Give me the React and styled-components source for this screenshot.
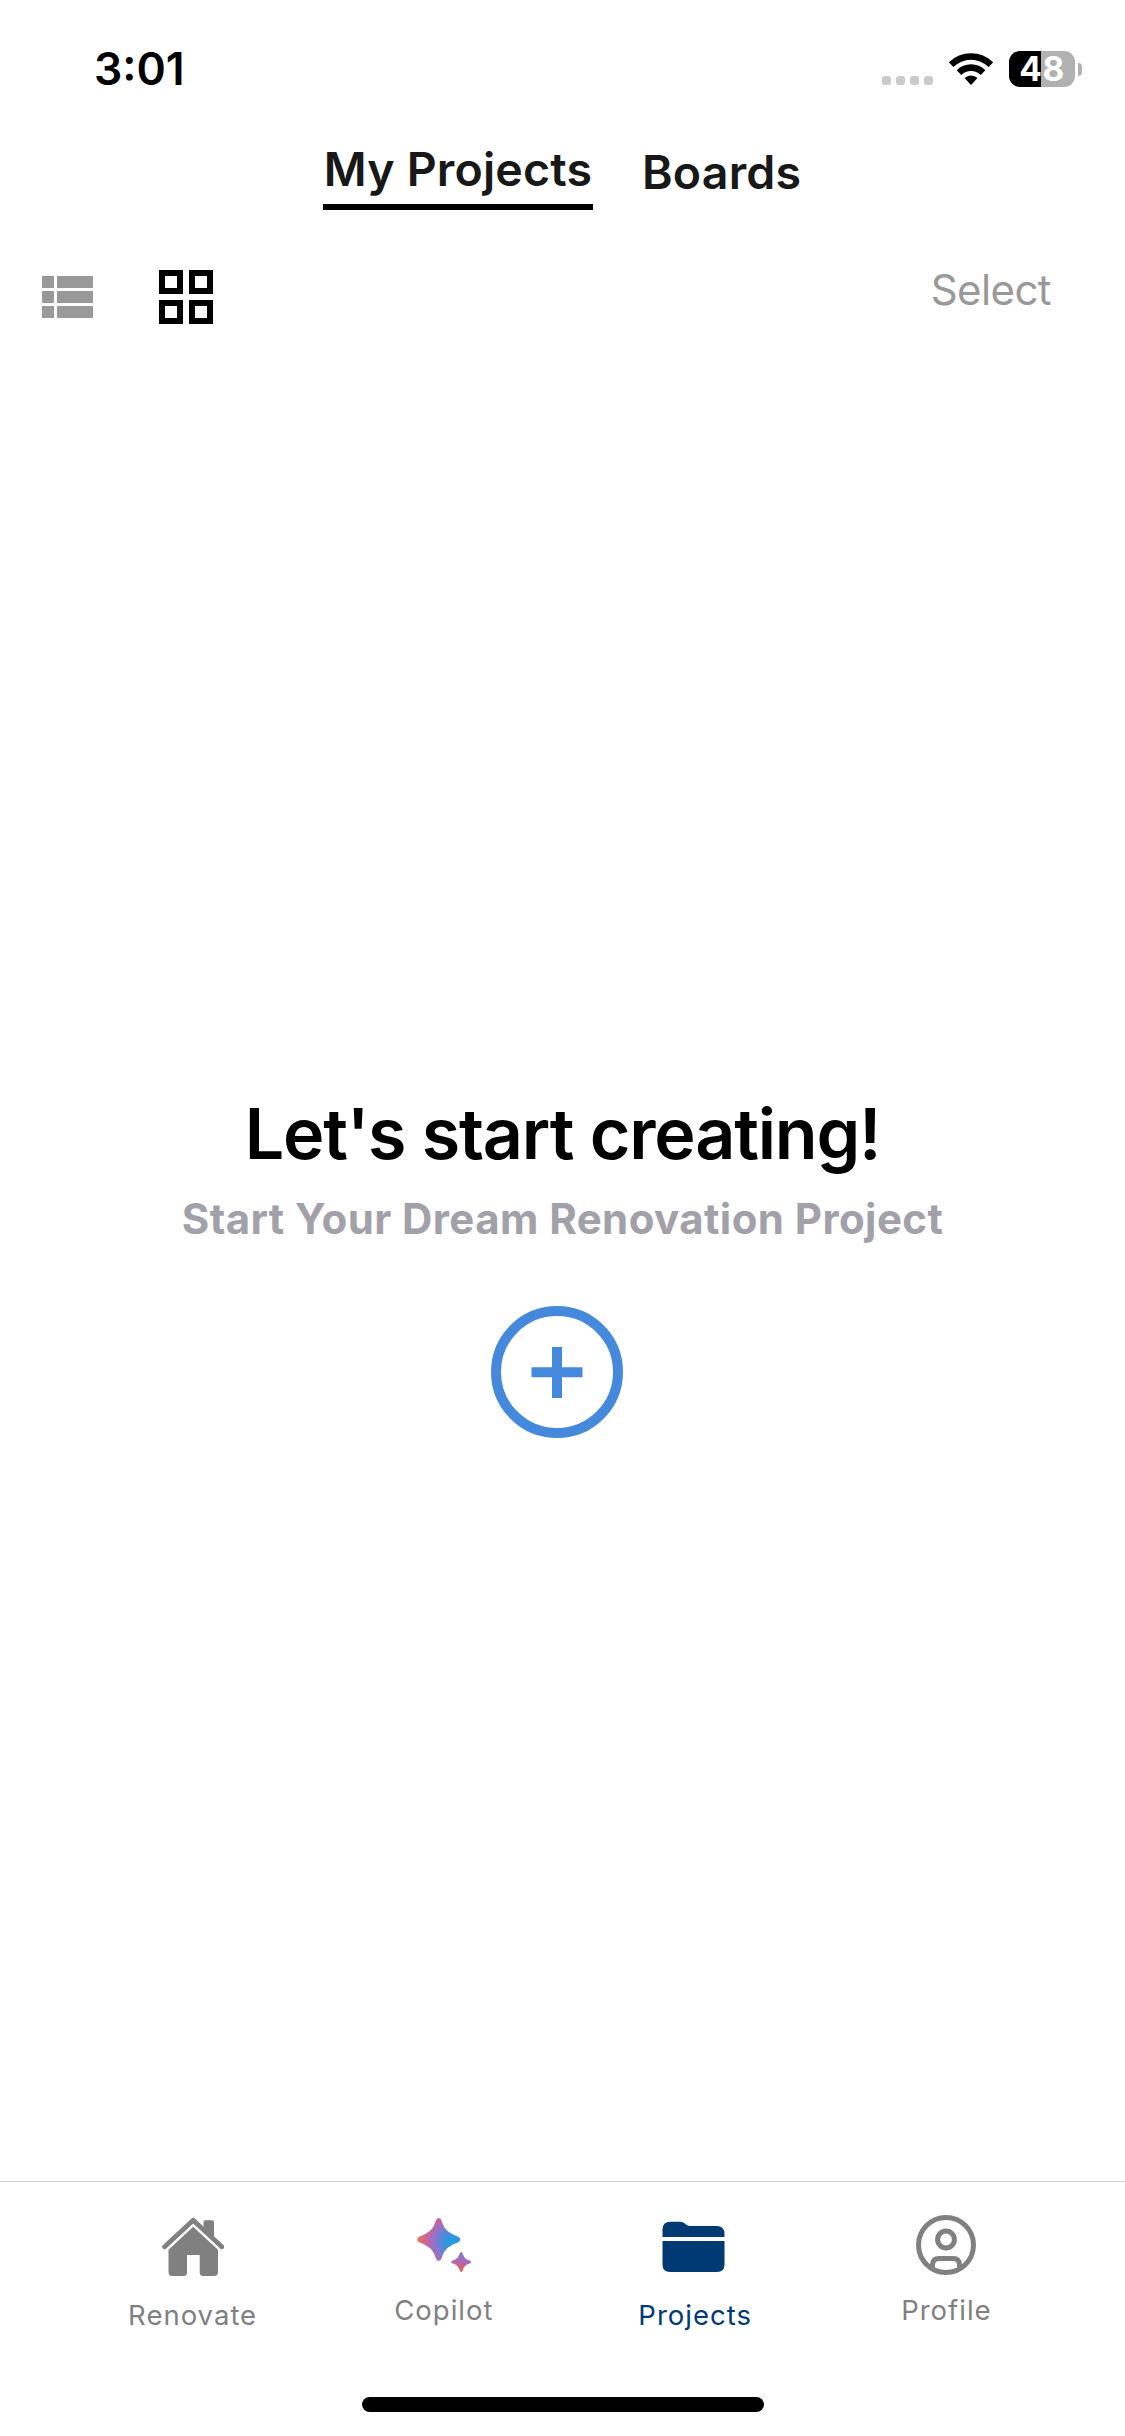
import styled, { createGlobalStyle } from "styled-components";

const GlobalStyle = createGlobalStyle`
  *, *::before, *::after {
    box-sizing: border-box;
  }

  body {
    margin: 0;
    background-color: #fff;
    font-family: Inter, "Liberation Sans", sans-serif;
  }

  button {
    padding: 0;
    border: 0;
    background: none;
    font: inherit;
    color: inherit;
  }

  svg {
    display: block;
  }
`;

const Screen = styled.div`
  display: flex;
  flex-direction: column;
  width: 1125px;
  height: 2436px;
  overflow: hidden;
  background-color: #fff;
`;

const StatusBar = styled.header`
  display: flex;
  align-items: center;
  justify-content: space-between;
  height: 138px;
  padding: 0 43px 0 94px;
`;

const Clock = styled.span`
  font-size: 44.5px;
  font-weight: 600;
  line-height: 54px;
`;

const StatusIcons = styled.div`
  display: flex;
  align-items: center;
`;

const SignalDots = styled.div`
  display: flex;
  gap: 5px;
  margin: 23px 15px 0 0;
`;

const Dot = styled.span`
  width: 9px;
  height: 9px;
  border-radius: 3px;
  background-color: #cacaca;
`;

const BatteryBody = styled.div`
  display: flex;
  align-items: center;
  justify-content: center;
  width: 66px;
  height: 36px;
  margin-left: 15px;
  border-radius: 11px;
  background: linear-gradient(to right, #000 32px, #b1b1b1 32px);
  color: #fff;
  font-size: 33.5px;
  font-weight: 700;
  line-height: 36px;
  letter-spacing: 0.6px;
`;

const BatteryCap = styled.span`
  width: 4px;
  height: 13px;
  margin-left: 3px;
  border-radius: 0 4px 4px 0;
  background-color: #b1b1b1;
`;

const Tabs = styled.nav`
  display: flex;
  align-items: flex-start;
  gap: 49px;
  height: 72px;
  padding-left: 323px;
`;

const Tab = styled.button`
  width: ${({ $active }) => ($active ? "270px" : "auto")};
  height: ${({ $active }) => ($active ? "72px" : "62px")};
  margin-top: ${({ $active }) => ($active ? "0" : "3px")};
  padding-bottom: ${({ $active }) => ($active ? "4px" : "0")};
  border-bottom: ${({ $active }) => ($active ? "6px solid #000" : "0")};
  color: #181818;
  font-size: 46.5px;
  font-weight: 600;
  line-height: 62px;
  letter-spacing: 0.2px;
  white-space: nowrap;
`;

const Toolbar = styled.div`
  display: flex;
  align-items: center;
  height: 174px;
  padding: 0 74px 0 42px;
`;

const ViewButton = styled.button`
  margin-right: 66px;
  color: ${({ $active }) => ($active ? "#000" : "#999")};
`;

const SelectButton = styled.button`
  margin-left: auto;
  padding-bottom: 14px;
  color: #999;
  font-size: 42px;
  line-height: 50px;
  letter-spacing: -0.6px;
`;

const EmptyState = styled.main`
  display: flex;
  flex: 1;
  flex-direction: column;
  align-items: center;
  padding-top: 708px;
`;

const Title = styled.h1`
  margin: 0;
  font-size: 70px;
  font-weight: 600;
  line-height: 84px;
  letter-spacing: -1.2px;
`;

const Subtitle = styled.p`
  margin: 18px 0 62px;
  color: #a2a1a9;
  font-size: 42px;
  font-weight: 700;
  line-height: 50px;
  letter-spacing: 0.42px;
`;

const AddButton = styled.button`
  margin-right: 11px;
  color: #4489dc;
`;

const BottomBar = styled.footer`
  display: flex;
  height: 255px;
  padding: 33px 53px 0 67px;
  border-top: 1px solid #d0d3d3;
`;

const BottomItem = styled.button`
  display: flex;
  flex: 1;
  flex-direction: column;
  align-items: center;
  color: ${({ $active }) => ($active ? "#003a75" : "#808080")};
`;

const BottomLabel = styled.span`
  margin-top: ${({ $raised }) => ($raised ? "16px" : "21px")};
  font-size: 27.5px;
  line-height: 34px;
  letter-spacing: 1px;
`;

const HomeIndicator = styled.div`
  position: absolute;
  top: 2397px;
  left: 362px;
  width: 402px;
  height: 15px;
  border-radius: 8px;
  background-color: #000;
`;

function WifiIcon() {
  return (
    <svg width="46" height="34" viewBox="0 0 46 34">
      <path d="M.8 10.3a31.5 31.5 0 0 1 44.4 0L40.6 15a25 25 0 0 0-35.2 0z" />
      <path d="M8.7 18.2a20.3 20.3 0 0 1 28.6 0l-4.6 4.7a13.8 13.8 0 0 0-19.4 0z" />
      <path d="M16.5 26.1a9.2 9.2 0 0 1 13 0L23 33z" />
    </svg>
  );
}

function ListIcon() {
  return (
    <svg width="51" height="42" viewBox="0 0 51 42" fill="currentColor">
      <path d="M0 0h12v12H0zM15 0h36v12H15zM0 15h12v12H0zM15 15h36v12H15zM0 30h12v12H0zM15 30h36v12H15z" />
    </svg>
  );
}

function GridIcon() {
  return (
    <svg
      width="54"
      height="54"
      viewBox="0 0 54 54"
      fill="none"
      stroke="currentColor"
      strokeWidth="6"
    >
      <path d="M3 3h18v18H3zM33 3h18v18H33zM3 33h18v18H3zM33 33h18v18H33z" />
    </svg>
  );
}

function PlusIcon() {
  return (
    <svg
      width="132"
      height="132"
      viewBox="0 0 132 132"
      fill="none"
      stroke="currentColor"
      strokeWidth="10"
    >
      <circle cx="66" cy="66" r="61" />
      <path d="M66 41v51M40.500 66.200h51" />
    </svg>
  );
}

function HomeIcon() {
  return (
    <svg width="62" height="62" viewBox="0 0 62 62" fill="currentColor">
      <path
        d="M2.600 31.800 31.200 5.200l28.600 26.600"
        fill="none"
        stroke="currentColor"
        strokeWidth="4.800"
        strokeLinecap="round"
        strokeLinejoin="round"
      />
      <path d="M41.500 13V7.300q0-2 2-2H50q2 0 2 2V23z" />
      <path d="M31.200 11.700 56 34.700V57q0 4-4 4H41.200q-3.500 0-3.500-3.500V40H25v17.500q0 3.500-3.500 3.500h-11q-4 0-4-4V34.700z" />
    </svg>
  );
}

function CopilotIcon() {
  return (
    <svg width="62" height="62" viewBox="0.8 0 62 62">
      <defs>
        <radialGradient
          id="spark"
          cx="40"
          cy="27"
          r="36"
          gradientUnits="userSpaceOnUse"
        >
          <stop offset="0" stopColor="#1c9fe0" />
          <stop offset="0.25" stopColor="#3f90dc" />
          <stop offset="0.5" stopColor="#9372cb" />
          <stop offset="0.72" stopColor="#c8669a" />
          <stop offset="1" stopColor="#f07a4a" />
        </radialGradient>
        <linearGradient id="spark-small" x1="0.6" y1="0.1" x2="0.5" y2="1">
          <stop offset="0" stopColor="#7f7ad8" />
          <stop offset="0.5" stopColor="#b765a8" />
          <stop offset="1" stopColor="#ee6450" />
        </linearGradient>
      </defs>
      <path
        fill="url(#spark)"
        d="M26.500 3q2 0 3 3c2.500 8 6 11.500 15 15q3.500 1.300 3.500 3.500t-3.500 3.500c-9 3.500-12.500 7-15 15q-1 3-3 3t-3-3c-2.500-8-6-11.500-15-15Q5 26.700 5 24.500T8.500 21c9-3.500 12.500-7 15-15q1-3 3-3z"
      />
      <path
        fill="url(#spark-small)"
        d="M49 37q1 0 1.500 1.500c1.300 4 3 5.700 7 7q1.500.5 1.500 1.500t-1.500 1.500c-4 1.300-5.700 3-7 7Q50 57 49 57t-1.500-1.500c-1.300-4-3-5.700-7-7Q39 48 39 47t1.500-1.500c4-1.300 5.700-3 7-7Q48 37 49 37z"
      />
    </svg>
  );
}

function FolderIcon() {
  return (
    <svg width="62" height="62" viewBox="1.500 0 62 62" fill="currentColor" overflow="visible">
      <path d="M0 22v-7.500q0-7.800 7.800-7.800h9.700q3 0 5.200 2l.8.700q2 1.600 4.500 1.600h26q8 0 8 8v3z" />
      <path d="M0 26h62v23.500q0 7.500-7.500 7.500h-47Q0 57 0 49.500z" />
    </svg>
  );
}

function ProfileIcon() {
  return (
    <svg
      width="62"
      height="62"
      viewBox="0 0 62 62"
      fill="none"
      stroke="currentColor"
      strokeWidth="5"
    >
      <circle cx="31" cy="30" r="27.500" />
      <circle cx="31" cy="24.500" r="8.400" />
      <path d="M17.500 53.500V50q0-6.500 6.500-6.500h14q6.500 0 6.500 6.500v3.500" />
    </svg>
  );
}

const bottomItems = [
  { label: "Renovate", Icon: HomeIcon },
  { label: "Copilot", Icon: CopilotIcon, raised: true },
  { label: "Projects", Icon: FolderIcon, active: true },
  { label: "Profile", Icon: ProfileIcon, raised: true },
];

export default function App() {
  return (
    <Screen>
      <GlobalStyle />
      <StatusBar>
        <Clock>3:01</Clock>
        <StatusIcons>
          <SignalDots>
            <Dot />
            <Dot />
            <Dot />
            <Dot />
          </SignalDots>
          <WifiIcon />
          <BatteryBody>48</BatteryBody>
          <BatteryCap />
        </StatusIcons>
      </StatusBar>
      <Tabs>
        <Tab $active>My Projects</Tab>
        <Tab>Boards</Tab>
      </Tabs>
      <Toolbar>
        <ViewButton>
          <ListIcon />
        </ViewButton>
        <ViewButton $active>
          <GridIcon />
        </ViewButton>
        <SelectButton>Select</SelectButton>
      </Toolbar>
      <EmptyState>
        <Title>Let's start creating!</Title>
        <Subtitle>Start Your Dream Renovation Project</Subtitle>
        <AddButton>
          <PlusIcon />
        </AddButton>
      </EmptyState>
      <BottomBar>
        {bottomItems.map(({ label, Icon, active, raised }) => (
          <BottomItem key={label} $active={active}>
            <Icon />
            <BottomLabel $raised={raised}>{label}</BottomLabel>
          </BottomItem>
        ))}
      </BottomBar>
      <HomeIndicator />
    </Screen>
  );
}
